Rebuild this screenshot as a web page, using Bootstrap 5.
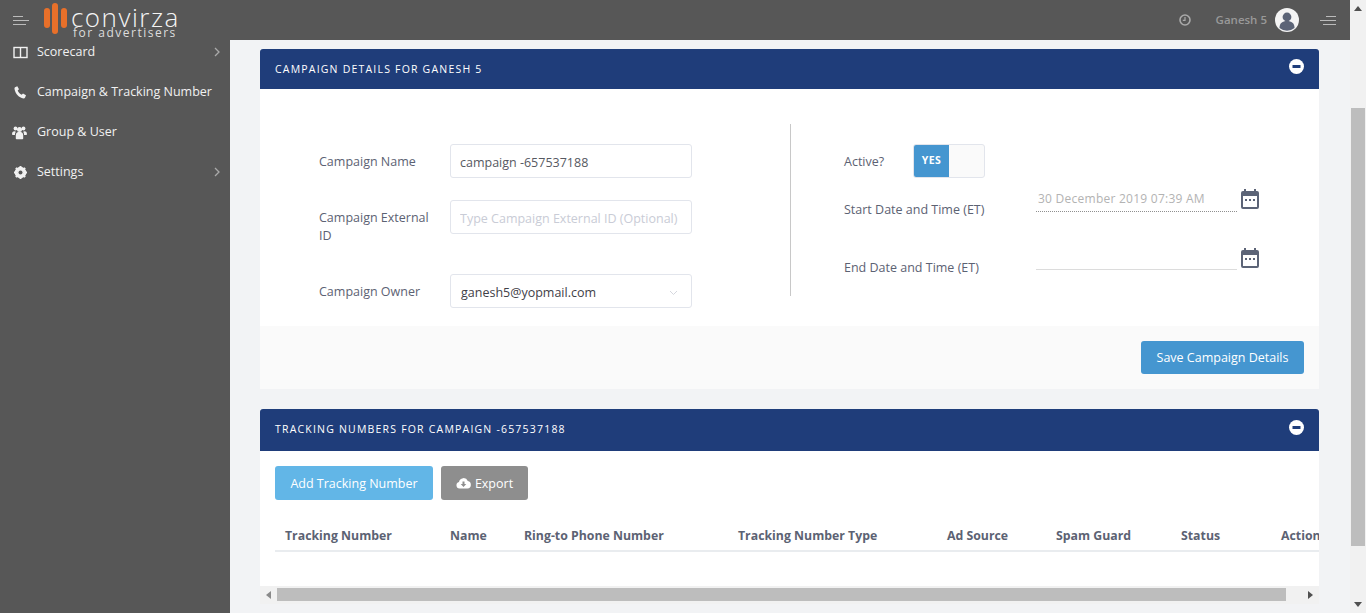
<!DOCTYPE html>
<html lang="en">
<head>
  <meta charset="UTF-8">
  <title>Campaign Details</title>
  <link href="https://cdn.jsdelivr.net/npm/bootstrap@5.3.3/dist/css/bootstrap.min.css" rel="stylesheet">
  <style>
    html,body{height:613px;overflow:hidden;}
    body{font-family:"Open Sans","Noto Sans",sans-serif;font-size:12.5px;color:#5c6273;background:#f2f3f5;}
    .shell{width:1350px;height:613px;}
    .topbar{height:40px;background:#575757;}
    .menu-lines{width:16px;height:9px;}
    .logo-word{font-weight:300;font-size:26px;line-height:24px;color:#f4f4f4;letter-spacing:1.5px;padding-top:2px;margin-bottom:-2px;}
    .logo-sub{font-size:12px;line-height:11px;color:#ddd;letter-spacing:1.5px;padding-left:2px;}
    .logo-box{margin-left:15px;height:40px;padding-top:3px;}
    .user-name{font-size:11.5px;font-weight:600;color:#999;}
    .sidebar{width:230px;background:#575757;overflow:hidden;}
    .side-list{margin-top:-8px;}
    .side-item{height:40px;padding:0 10px 0 13px;color:#f1f1f1;text-decoration:none;font-size:12.5px;}
    .side-item svg.lead-ic{width:15px;height:15px;margin-right:9px;flex:none;}
    .content{padding:9px 31px 0 30px;min-width:0;}
    .panel{background:#fff;}
    .panel-top{background:#1f3d7a;color:#fff;padding:0 15px;font-size:10.5px;letter-spacing:1.2px;text-transform:uppercase;border-radius:3px 3px 0 0;}
    .details .panel-top{height:40px;}
    .details .panel-top>span{padding-top:2px;}
    .numbers .panel-top{height:42px;}
    .form-side{width:530px;padding:20px 0 18px 59px;}
    .field-label{width:131px;padding-right:16px;line-height:18px;color:#5c6273;}
    .field-box{width:242px;height:34px;border:1px solid #e2e5ec;border-radius:3px;font-size:12.5px;padding:2px 9px 0;color:#575962;box-shadow:none;}
    .field-box::placeholder{color:#c9ccd6;opacity:1;}
    .select-box{padding:4px 9px 0 10px;color:#3f4047;}
    .rule-v{width:1px;height:172px;background:#c8c8c8;}
    .date-side{padding:20px 0 0 53px;}
    .toggle-wrap{width:72px;height:34px;border:1px solid #e2e5ec;border-radius:3px;background:#fafafa;overflow:hidden;}
    .toggle-on{width:35px;background:#4596d0;color:#fff;font-size:10.5px;font-weight:700;letter-spacing:.5px;}
    .date-label{width:192px;}
    .date-field{width:201px;padding-left:2px;font-size:12px;letter-spacing:.25px;color:#b3b3b3;line-height:18px;}
    .date-dotted{border-bottom:1px dotted #8f8f8f;}
    .date-plain{border-bottom:1px solid #dcdcdc;}
    .cal-ic{width:18px;height:20px;margin-left:4px;flex:none;}
    .panel-foot{height:63px;background:#fafafa;padding:15px;}
    .btn-save{width:163px;height:33px;background:#4596d0;color:#fff;font-size:12.5px;border-radius:3px;border:0;padding:2px 0 0;}
    .btn-add{width:158px;height:34px;background:#62b6e7;color:#fff;font-size:12.5px;border-radius:3px;border:0;padding:2px 0 0;}
    .btn-export{width:87px;height:34px;background:#8e8e8e;color:#fff;font-size:12.5px;border-radius:3px;border:0;padding:2px 0 0;}
    .numbers-body{padding:15px 0 0 15px;height:135px;overflow:hidden;}
    .num-table{table-layout:fixed;width:1096px;margin:16px 0 0;}
    .num-table th{padding:11px 10px 5px;font-size:12.3px;line-height:18px;font-weight:700;color:#5c6273;border-bottom:2px solid #e9ecef;white-space:nowrap;background:transparent;}
    .hbar{height:18px;background:#f1f1f1;}
    .hbar-arrow{width:17px;}
    .hbar-track{padding:2px 0 3px;}
    .hbar-thumb{width:1009px;background:#bdbdbd;}
    .vbar{width:16px;height:613px;background:#f1f1f1;}
    .vbar-arrow{height:17px;}
    .vbar-thumb{width:14px;height:438px;margin:91px 0 50px 1px;background:#bdbdbd;}
  </style>
</head>
<body class="d-flex">

<div class="shell d-flex flex-column">
  <header class="topbar d-flex align-items-center flex-shrink-0">
    <svg class="menu-lines" style="margin-left:13px" viewBox="0 0 16 9"><g stroke="#bbb" stroke-width="1"><path d="M0 .5h10M0 4.500h16M0 8.500h13"/></g></svg>
    <div class="logo-box d-flex align-items-start">
      <svg width="24" height="31" viewBox="0 0 24 31"><g fill="#e8702a"><rect x="0" y="5" width="6" height="20" rx="3"/><rect x="8" y="0" width="6" height="31" rx="3"/><rect x="17" y="5" width="6" height="20" rx="3"/></g></svg>
      <div style="margin-left:3px">
        <div class="logo-word">convirza</div>
        <div class="logo-sub">for advertisers</div>
      </div>
    </div>
    <div class="ms-auto d-flex align-items-center">
      <svg width="12" height="12" viewBox="0 0 12 12" fill="none" stroke="#aaa" stroke-width="1.600"><circle cx="6" cy="6" r="5"/><path d="M6 3v3.300H3.800" stroke-width="1.200"/></svg>
      <span class="user-name" style="margin-left:25px">Ganesh 5</span>
      <svg class="ms-2" width="24" height="24" viewBox="0 0 24 24"><circle cx="12" cy="12" r="12" fill="#f4f4f4"/><circle cx="12" cy="9" r="4.400" fill="#5c6477"/><path d="M4.500 20c0-5 3-7 7.500-7s7.500 2 7.500 7a12 12 0 0 1-15 0z" fill="#5c6477"/></svg>
      <svg class="menu-lines" style="margin:0 14px 0 21px" viewBox="0 0 16 9"><g stroke="#bbb" stroke-width="1"><path d="M6 .5h10M0 4.500h16M3 8.500h13"/></g></svg>
    </div>
  </header>

  <div class="d-flex flex-grow-1" style="min-height:0">
    <nav class="sidebar flex-shrink-0">
      <div class="side-list">
        <a class="side-item d-flex align-items-center" href="#">
          <svg class="lead-ic" viewBox="0 0 15 15" fill="none" stroke="#f1f1f1" stroke-width="1.400"><rect x="1" y="2.500" width="13" height="10"/><path d="M7.500 2.500v10"/></svg>
          <span class="flex-grow-1">Scorecard</span>
          <svg width="6" height="10" viewBox="0 0 6 10" fill="none" stroke="#aaa" stroke-width="1.300"><path d="M1 1l4 4-4 4"/></svg>
        </a>
        <a class="side-item d-flex align-items-center" href="#">
          <svg class="lead-ic" viewBox="0 0 15 15" fill="#f1f1f1"><path d="M2 2.200 4.300 1.300l1.700 3-1.300 1.300c.6 1.800 2.200 3.500 4 4.200L10 8.500l3 1.700-.9 2.300c-.3.600-1 1-1.700.9C6 12.700 2.400 9 1.500 4 1.400 3.300 1.500 2.600 2 2.200z"/></svg>
          <span class="flex-grow-1">Campaign &amp; Tracking Number</span>
        </a>
        <a class="side-item d-flex align-items-center" href="#">
          <svg class="lead-ic" viewBox="0 0 15 15" fill="#f1f1f1" style="width:17px;margin-left:-2px;margin-right:9px"><circle cx="3.500" cy="3.500" r="1.900"/><circle cx="11.500" cy="3.500" r="1.900"/><circle cx="7.500" cy="4.500" r="2.500"/><path d="M0 9.500c0-2 .8-3.200 2.500-3.200.6 0 1 .2 1.300.4-.6.800-.9 1.900-.9 3.300H0.800zM15 9.500c0-2-.8-3.200-2.500-3.200-.6 0-1 .2-1.300.4.600.8.900 1.900.9 3.300h2.100z"/><path d="M3.800 10.500c0-2.500 1.300-3.700 3.700-3.700s3.700 1.200 3.700 3.700v3c0 .5-.3.800-.8.800H4.600c-.5 0-.8-.3-.8-.8z"/></svg>
          <span class="flex-grow-1">Group &amp; User</span>
        </a>
        <a class="side-item d-flex align-items-center" href="#">
          <svg class="lead-ic" viewBox="0 0 15 15"><circle cx="7.500" cy="7.500" r="4.300" fill="none" stroke="#f1f1f1" stroke-width="3"/><path d="M7.500 1v13M1 7.500h13M2.900 2.900l9.200 9.200M12.100 2.900l-9.200 9.200" stroke="#f1f1f1" stroke-width="2"/><circle cx="7.500" cy="7.500" r="2" fill="#575757"/></svg>
          <span class="flex-grow-1">Settings</span>
          <svg width="6" height="10" viewBox="0 0 6 10" fill="none" stroke="#aaa" stroke-width="1.300"><path d="M1 1l4 4-4 4"/></svg>
        </a>
      </div>
    </nav>

    <main class="content flex-grow-1">
      <section class="panel details mb-0">
        <div class="panel-top d-flex align-items-center justify-content-between">
          <span>Campaign Details for Ganesh 5</span>
          <svg width="15" height="15" viewBox="0 0 15 15" style="margin-top:-6px"><circle cx="7.500" cy="7.500" r="7.500" fill="#fff"/><rect x="3.500" y="6" width="8" height="3" fill="#1f3d7a"/></svg>
        </div>
        <div class="d-flex align-items-start" style="padding-top:35px">
          <div class="form-side">
            <div class="d-flex align-items-center" style="margin-bottom:22px">
              <label class="field-label" style="padding-top:2px">Campaign Name</label>
              <input class="form-control field-box" value="campaign -657537188">
            </div>
            <div class="d-flex align-items-start" style="margin-bottom:29px">
              <label class="field-label" style="padding-top:9px">Campaign External ID</label>
              <input class="form-control field-box" placeholder="Type Campaign External ID (Optional)">
            </div>
            <div class="d-flex align-items-center">
              <label class="field-label" style="padding-top:2px">Campaign Owner</label>
              <div class="field-box select-box d-flex align-items-center justify-content-between">
                <span>ganesh5@yopmail.com</span>
                <svg class="me-1" width="9" height="6" viewBox="0 0 9 6" fill="none" stroke="#d5d7de"><path d="M1 1l3.500 3.500L8 1"/></svg>
              </div>
            </div>
          </div>
          <div class="rule-v"></div>
          <div class="date-side">
            <div class="d-flex align-items-center">
              <span style="width:69px;padding-top:2px">Active?</span>
              <div class="toggle-wrap d-flex">
                <div class="toggle-on d-flex align-items-center justify-content-center">YES</div>
              </div>
            </div>
            <div class="d-flex align-items-start" style="margin-top:12px">
              <span class="date-label" style="padding-top:11px">Start Date and Time (ET)</span>
              <div class="date-field date-dotted" style="margin-top:-4px;height:26px;padding-top:4px">30 December 2019 07:39 AM</div>
              <svg class="cal-ic" viewBox="0 0 18 20" style="margin-top:-1px"><use href="#cal"/></svg>
            </div>
            <div class="d-flex align-items-start" style="margin-top:28px">
              <span class="date-label" style="padding-top:11px">End Date and Time (ET)</span>
              <div class="date-field date-plain" style="height:22px"></div>
              <svg class="cal-ic" viewBox="0 0 18 20" style="margin-top:0"><use href="#cal"/></svg>
            </div>
          </div>
        </div>
        <div class="panel-foot d-flex justify-content-end">
          <button class="btn btn-save">Save Campaign Details</button>
        </div>
      </section>

      <section class="panel numbers" style="margin-top:20px">
        <div class="panel-top d-flex align-items-center justify-content-between">
          <span>Tracking Numbers for Campaign -657537188</span>
          <svg width="15" height="15" viewBox="0 0 15 15" style="margin-top:-6px"><circle cx="7.500" cy="7.500" r="7.500" fill="#fff"/><rect x="3.500" y="6" width="8" height="3" fill="#1f3d7a"/></svg>
        </div>
        <div class="numbers-body">
          <div class="d-flex gap-2">
            <button class="btn btn-add">Add Tracking Number</button>
            <button class="btn btn-export d-flex align-items-center justify-content-center">
              <svg class="me-1" width="15" height="12" viewBox="0 0 15 12" style="margin-top:-2px"><path d="M3.500 11.500A3.300 3.300 0 0 1 3 5a4.600 4.600 0 0 1 8.800-1A3.800 3.800 0 0 1 11.500 11.500z" fill="#fff"/><path d="M6.500 4.500h2v2.500h1.800L7.500 10 4.700 7h1.800z" fill="#8e8e8e"/></svg>
              Export
            </button>
          </div>
          <table class="table num-table">
            <colgroup><col style="width:165px"><col style="width:74px"><col style="width:214px"><col style="width:209px"><col style="width:109px"><col style="width:125px"><col style="width:100px"><col style="width:100px"></colgroup>
            <thead><tr><th>Tracking Number</th><th>Name</th><th>Ring-to Phone Number</th><th>Tracking Number Type</th><th>Ad Source</th><th>Spam Guard</th><th>Status</th><th>Action</th></tr></thead>
          </table>
        </div>
        <div class="hbar d-flex">
          <div class="hbar-arrow d-flex align-items-center justify-content-center"><svg width="5" height="8" viewBox="0 0 5 8"><path d="M5 0v8L0 4z" fill="#8a8a8a"/></svg></div>
          <div class="hbar-track d-flex flex-grow-1"><div class="hbar-thumb"></div></div>
          <div class="hbar-arrow d-flex align-items-center justify-content-center"><svg width="5" height="8" viewBox="0 0 5 8"><path d="M0 0v8l5-4z" fill="#505050"/></svg></div>
        </div>
      </section>
    </main>
  </div>
</div>

<aside class="vbar flex-shrink-0">
  <div class="vbar-arrow d-flex align-items-center justify-content-center"><svg width="8" height="5" viewBox="0 0 8 5"><path d="M0 5h8L4 0z" fill="#505050"/></svg></div>
  <div class="vbar-thumb"></div>
  <div class="vbar-arrow d-flex align-items-center justify-content-center"><svg width="8" height="5" viewBox="0 0 8 5"><path d="M0 0h8L4 5z" fill="#505050"/></svg></div>
</aside>

<svg width="0" height="0" class="d-block"><defs><g id="cal"><path d="M3 0h2v2h8V0h2v2h1a2 2 0 0 1 2 2v14a2 2 0 0 1-2 2H2a2 2 0 0 1-2-2V4a2 2 0 0 1 2-2h1z" fill="#5c6477"/><rect x="2" y="7" width="14" height="11" fill="#fff"/><rect x="4" y="10" width="2" height="2" fill="#5c6477"/><rect x="8" y="10" width="2" height="2" fill="#5c6477"/><rect x="12" y="10" width="2" height="2" fill="#5c6477"/></g></defs></svg>

<script src="https://cdn.jsdelivr.net/npm/bootstrap@5.3.3/dist/js/bootstrap.bundle.min.js"></script>
</body>
</html>
